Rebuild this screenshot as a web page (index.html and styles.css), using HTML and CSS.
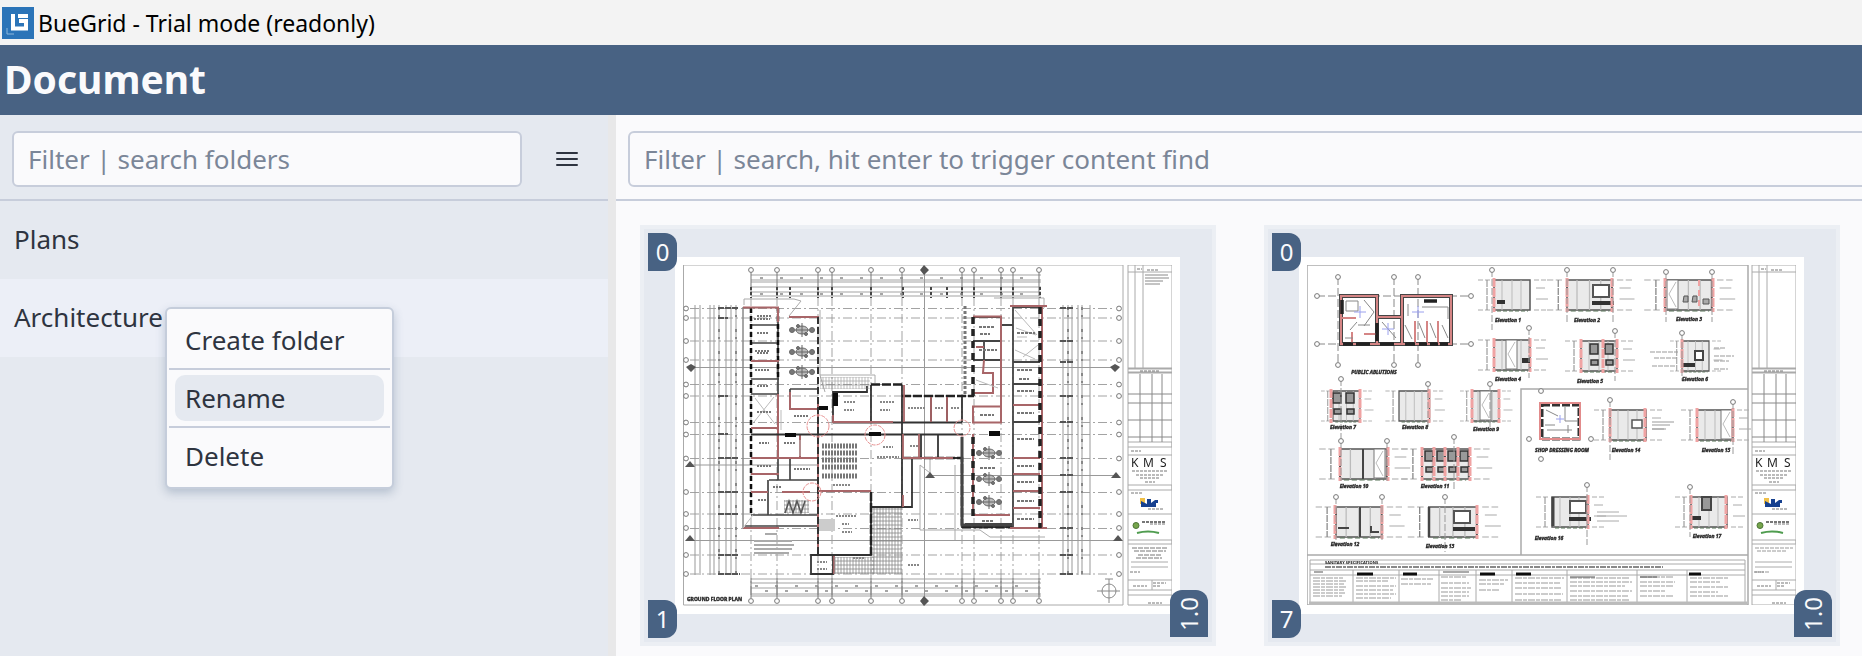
FILE: index.html
```html
<!DOCTYPE html>
<html lang="en">
<head>
<meta charset="utf-8">
<title>BueGrid - Trial mode (readonly)</title>
<link rel="stylesheet" href="styles.css">
</head>
<body>
<div class="titlebar">
  <svg class="app-icon" viewBox="0 0 32 32" aria-hidden="true">
    <rect width="32" height="32" fill="#2b74b8"/>
    <path d="M11 7v14.500h13V14h-7" fill="none" stroke="#fff" stroke-width="4"/>
    <path d="M16 9h10" stroke="#fff" stroke-width="4"/>
    <path d="M5 21v6h7" fill="none" stroke="#8fb8dc" stroke-width="1"/>
  </svg>
  <span>BueGrid - Trial mode (readonly)</span>
</div>
<header class="header"><h1>Document</h1></header>
<div class="workspace">
  <aside class="sidebar">
    <div class="toolbar">
      <input class="filter" type="text" aria-label="Filter folders" placeholder="Filter | search folders">
      <button class="menu-button" type="button" aria-label="Menu">
        <svg viewBox="0 0 22 18" aria-hidden="true"><path d="M1 3h20M1 9h20M1 15h20" stroke="#2e3440" stroke-width="2" stroke-linecap="round"/></svg>
      </button>
    </div>
    <ul class="folders">
      <li class="folder">Plans</li>
      <li class="folder active">Architecture</li>
    </ul>
    <div class="context-menu" role="menu">
      <button type="button" role="menuitem">Create folder</button>
      <hr>
      <button class="hovered" type="button" role="menuitem">Rename</button>
      <hr>
      <button type="button" role="menuitem">Delete</button>
    </div>
  </aside>
  <div class="splitter"></div>
  <main class="content">
    <div class="toolbar wide">
      <input class="filter" type="text" aria-label="Filter documents" placeholder="Filter | search, hit enter to trigger content find">
    </div>
    <div class="cards">
      <article class="card">
        <svg class="sheet" viewBox="675 257 505 357" role="img" aria-label="Ground floor plan">
          <defs>
            <filter id="soft" x="0" y="0" width="1" height="1"><feGaussianBlur stdDeviation=".7"/></filter>
            <pattern id="hatch" width="3" height="4" patternUnits="userSpaceOnUse"><path d="M0 1h3M1 0v4" stroke="#888" stroke-width=".8"/></pattern>
            <g id="bub"><circle r="2.400" fill="#fff" stroke="#777"/></g>
            <g id="tri"><path d="M-5 2L0 -4L5 2z" fill="#555"/></g>
            <g id="desk" fill="#777" stroke="#666"><ellipse rx="6" ry="4" fill="#bbb"/><path d="M0-7v14M-7 0h14" stroke-width="1"/><circle cx="-10" r="2.500"/><circle cx="10" r="2.500"/><circle cx="-4" cy="-4" r="1.500"/><circle cx="4" cy="4" r="1.500"/></g>
            <g id="block" fill="none" stroke="#aaa">
              <path d="M1128 265h44v340h-44zM1128 272h44M1135 265v103M1143 265v103M1128 442h44v5h-44M1128 455h44M1128 485h44v5h-44M1128 514h44M1128 540h44v4h-44M1131 562h37M1131 567h37M1128 580h44M1128 590h44M1128 595h44M1152 580v10"/>
              <path d="M1128 368.500h44M1128 372.500h44" stroke-width="2"/>
              <path d="M1128 394h44M1128 403h44M1128 420h44M1128 437h44M1140 374v68M1152 374v68M1162 374v68" stroke="#888"/>
              <path d="M1147 270h11M1137 269h5M1140 371h20M1131 451h10M1132 471h36M1136 475h28M1140 478h20M1145 482h10M1131 493h12M1148 509h15M1150 524h15M1133 586h14M1153 583h13M1153 586h8M1148 603h14M1130 572h10" stroke="#777" stroke-dasharray="3 1"/>
              <path d="M1140 498h5v6h-5z" fill="#f0c04a" stroke="none"/>
              <path d="M1141 507v-6l6 3v-5h4v4l4-3h3v3h-2v4z" fill="#17418f" stroke="none"/>
              <circle cx="1136" cy="525.500" r="3" fill="#76a54c" stroke="#4b7436"/>
              <path d="M1137 533q11-3 22 0" stroke="#4f9c4f" stroke-width="2"/>
              <path d="M1142 522h24" stroke="#777" stroke-width="2" stroke-dasharray="3 1"/>
              <text x="1131" y="467" font-size="12" fill="#222" stroke="none">K</text><text x="1143" y="467" font-size="12" fill="#222" stroke="none">M</text><text x="1160" y="467" font-size="12" fill="#222" stroke="none">S</text>
            </g>
          </defs>
          <rect x="675" y="257" width="505" height="357" fill="#fff"/>
          <g filter="url(#soft)">
            <use href="#block"/>
            <path d="M1132 548h36M1134 551h32M1138 555h24M1136 558h26" stroke="#777" stroke-dasharray="5 1"/>
            <path d="M1145 275h23M1145 278h24M1145 281h18M1145 284h15" stroke="#888"/>
            <g fill="none">
              <path d="M683.500 265H1123v340H683.500z" stroke="#aaa"/>
              <!-- grid axes -->
              <path d="M690 308.500h425M690 318h425M690 341h425M690 360h425M690 384.500h425M690 396h425M690 422.500h425M690 434.500h425M690 458.500h425M690 492.500h425M690 514h425M690 528.500h425M690 555h425M690 574h425M751 297v300M777 297v300M818 297v300M832 297v300M871 297v300M902 297v300M962 297v300M974 297v300M1001 297v300M1013 297v300M1039 297v300" stroke="#999" stroke-width=".9" stroke-dasharray="9 3 2 3"/>
              <path d="M690 367.500h425M690 465h128M930 475.500h185M690 540.500h425M924.500 270v330" stroke="#999"/>
              <path d="M751 275h290M751 280h290M751 282h290M751 287h290M751 292h290M751 296h290M751 579h290M751 583h290M751 588h290M751 594h290M751 596h290" stroke="#999" stroke-width=".9"/>
              <path d="M751 272v24M777 272v24M818 272v24M832 272v24M871 272v24M902 272v24M962 272v24M974 272v24M1001 272v24M1013 272v24M1039 272v24M751 578v20M777 578v20M818 578v20M832 578v20M871 578v20M902 578v20M962 578v20M974 578v20M1001 578v20M1013 578v20M1039 578v20" stroke="#777"/>
              <path d="M751 287v11M777 287v11M790 287v11M818 287v11M832 287v11M871 287v11M903 287v11M931 287v11M947 287v11M962 287v11M974 287v11M1001 287v11M1013 287v11M1040 287v11" stroke="#444" stroke-width="2" stroke-dasharray="3 2"/>
              <path d="M760 278h270M760 294h270M755 586h280M765 591h270" stroke="#888" stroke-width="1.500" stroke-dasharray="3 17"/>
              <path d="M695 305v270M700 305v270M710 305v270M714 305v270M719 305v270M726 305v270M731 305v270M736 305v270M1063 305v270M1068 305v270M1072 305v270M1078 305v270M1082 305v270M1090 305v270" stroke="#999"/>
              <path d="M719 307v268M736 307v268M1068 307v268M1082 307v268" stroke="#888" stroke-width="2" stroke-dasharray="3 5 2 12"/>
              <path d="M718 308h20M718 318h10M718 396h10M718 434h10M718 458h20M718 492h20M718 514h20M718 555h20M718 574h22M1060 308h14M1060 341h14M1060 362h14M1060 396h14M1060 422h14M1060 458h14M1060 475h14M1060 492h14M1060 528h14M1060 555h14M1060 574h14" stroke="#555" stroke-width="2" stroke-dasharray="6 1"/>
              <path d="M744 305v-6h50l7 2-12 15M820 375h55v8M820 375l5 17M820 310v65M994 298h50v10M930 458v15l-10-8v65h60l10 7h55M955 465v75" stroke="#aaa"/>
              <!-- west wing -->
              <path d="M743 307v221" stroke="#888" stroke-width="1.500"/>
              <path d="M751 325h28M751 343h28M751 379h28M751 394h28M751 458h28M769 480h49M751 515h67M745 526h73M778 307v173M768 480v35M790 389v20M790 458v22M790 389h28M751 492h17" stroke="#444" stroke-width="1.700"/>
              <path d="M751 308v207M778 308v70" stroke="#111" stroke-width="2.500" stroke-dasharray="5 3"/>
              <path d="M743 307.500h36M789 317h30M751 361h28M751 428h28M790 392v17h28M778 394v65M800 434v24M751 458h67M751 474h28M751 492h17M782 492h28M743 528h36M818 400v155M778 307v15" stroke="#a86567" stroke-width="2"/>
              <path d="M818 317v238" stroke="#333" stroke-width="2" stroke-dasharray="7 3"/>
              <path d="M754 422l20-25M755 398l20 26M743 528l10-13M781 430v-20M800 440v16" stroke="#bbb"/>
              <path d="M757 316h14M754 319h16M757 333h12M755 351h14M757 353h12M755 370h14M757 386h12M757 412h14M759 443h10M784 443h12M757 466h14M794 469h16M794 416h14M758 500h8M773 487h8" stroke="#777" stroke-width="2" stroke-dasharray="2 1"/>
              <rect x="784" y="500" width="25" height="13" fill="url(#hatch)"/><path d="M785 513l4-12 4 12 4-12 4 12 4-12" stroke="#555" stroke-width="1.500"/>
              <!-- central hall -->
              <path d="M833 392h34v-6M833 391v31M871 385v37M902 385v122M931 396v26M947 396v26M962 396v26M833 422.500h129M751 434.500h212M818 491h53M871 492v63h-38M811 555h22v19h-22zM871 507h41v-49M902 458h60v69h51M938 434v24M921 434v24" stroke="#333" stroke-width="1.800"/>
              <path d="M871 384.500h32M902 396h72M962 527h50M871 492v63M902 458h60v67" stroke="#222" stroke-width="2.500" stroke-dasharray="9 2"/>
              <path d="M904 385v37M931 397v25M947 397v25M818 491h53M903 434v24h50M919 434v24M834 556v18M903 495v12M833 415v7h60" stroke="#a86567" stroke-width="1.800"/>
              <path d="M833 393h5v13h-5zM785 433h11v4h-11zM869 432h12v4h-12zM989 431h11v5h-11zM819 406h9v4h-9z" fill="#111"/>
              <rect x="872" y="508" width="30" height="66" fill="url(#hatch)"/><rect x="834" y="557" width="40" height="17" fill="url(#hatch)"/><rect x="820" y="377" width="50" height="12" fill="url(#hatch)" opacity=".7"/>
              <path d="M822 446h35M822 453h35M822 460h35M822 467h35M822 476h35" stroke="#777" stroke-width="5" stroke-dasharray="2 1"/>
              <path d="M819 519h16v12h-16z" fill="#ccc"/>
              <path d="M844 402h12M844 410h10M880 402h14M880 410h10M908 408h18M935 408h8M951 408h8M836 516h20M842 524h7M842 532h10M817 562h10M817 569h10M833 485h18M883 447h10M877 457h22M910 446h9M908 520h10M908 565h12M853 558h12" stroke="#888" stroke-width="2" stroke-dasharray="2 1"/>
              <path d="M754 541h38M754 545h40M754 549h38M754 553h35M765 534h12" stroke="#aaa" stroke-width="2"/>
              <!-- east wing -->
              <path d="M973 317h28v106M973 341h28M973 360h28M984 341v19M1013 307v221M1013 307h27M1013 362h27M1013 384h27M1013 422h27M1001 325h12M973 515h37M965 524h47" stroke="#444" stroke-width="1.800"/>
              <path d="M962 437v88h50" stroke="#444" stroke-width="3"/>
              <path d="M973 316.500h28v106h-28v-16h27M976 347h8M984 360l-1 13h10v20h-20M1010 306h37M1013 405h27M1013 458h27M1013 474h27M1013 491h27M1013 508h27M1010 528h37M973 434v81h37M1042 307v221" stroke="#a86567" stroke-width="2"/>
              <path d="M973 317v80M1040 307v221M973 437v80" stroke="#222" stroke-width="3.500" stroke-dasharray="7 5"/>
              <path d="M965 306v90" stroke="#777" stroke-width="3" stroke-dasharray="3 2"/>
              <path d="M1015 310l22 25M1016 328l20 7M1038 345l-15 12M976 380l22 8M1015 350l20 9M1017 337h10" stroke="#bbb"/>
              <path d="M979 327h15M980 334h10M979 350h10M987 350h10M1017 333h18M1017 370h15M1019 379h10M1017 391h17M1017 413h17M1017 439h17M1017 466h17M1017 482h17M1017 501h17M1017 519h17M980 415h14M982 521h12M980 468h16" stroke="#777" stroke-width="2" stroke-dasharray="3 1"/>
            </g>
            <use href="#desk" x="802" y="330"/><use href="#desk" x="802" y="352"/><use href="#desk" x="802" y="372"/>
            <use href="#desk" x="989" y="453"/><use href="#desk" x="989" y="479"/><use href="#desk" x="989" y="502"/>
            <g fill="none" stroke="#e79292" stroke-dasharray="4 1"><circle cx="818" cy="426" r="11"/><circle cx="875" cy="435" r="10"/><circle cx="812" cy="492" r="9"/><circle cx="962" cy="428" r="8"/></g>
            <use href="#bub" x="751" y="270"/><use href="#bub" x="777" y="270"/><use href="#bub" x="818" y="270"/><use href="#bub" x="832" y="270"/><use href="#bub" x="871" y="270"/><use href="#bub" x="902" y="270"/><use href="#bub" x="962" y="270"/><use href="#bub" x="974" y="270"/><use href="#bub" x="1001" y="270"/><use href="#bub" x="1013" y="270"/><use href="#bub" x="1039" y="270"/>
            <use href="#bub" x="751" y="601"/><use href="#bub" x="777" y="601"/><use href="#bub" x="818" y="601"/><use href="#bub" x="832" y="601"/><use href="#bub" x="871" y="601"/><use href="#bub" x="902" y="601"/><use href="#bub" x="962" y="601"/><use href="#bub" x="974" y="601"/><use href="#bub" x="1001" y="601"/><use href="#bub" x="1013" y="601"/><use href="#bub" x="1039" y="601"/>
            <path d="M920 270l4-5 5 5-5 5zM920 601l4-5 5 5-5 5z" fill="#555"/>
            <g id="rows"><use href="#bub" x="686" y="308.500"/><use href="#bub" x="686" y="318"/><use href="#bub" x="686" y="341"/><use href="#bub" x="686" y="360"/><use href="#bub" x="686" y="384.500"/><use href="#bub" x="686" y="396"/><use href="#bub" x="686" y="422.500"/><use href="#bub" x="686" y="434.500"/><use href="#bub" x="686" y="458.500"/><use href="#bub" x="686" y="492"/><use href="#bub" x="686" y="514"/><use href="#bub" x="686" y="528"/><use href="#bub" x="686" y="555"/><use href="#bub" x="686" y="574"/></g>
            <use href="#rows" x="433"/>
            <use href="#tri" x="690" y="465"/><use href="#tri" x="690" y="539"/><use href="#tri" x="1116" y="476"/><use href="#tri" x="1118" y="539"/><use href="#tri" x="930" y="476"/><path d="M686 367l5-3 5 3-5 5zM1110 367l5-3 5 3-5 5z" fill="#555"/>
            <g fill="none" stroke="#888"><circle cx="1109" cy="591" r="7"/><path d="M1097 591h23M1109 579v24M1105 579h8"/></g>
            <text x="687" y="601" font-size="5" font-weight="bold" fill="#111" stroke="#333" stroke-width=".4">GROUND FLOOR PLAN</text>
          </g>
        </svg>
        <span class="badge top">0</span>
        <span class="badge bottom">1</span>
        <span class="badge version">1.0</span>
      </article>
      <article class="card">
        <svg class="sheet" viewBox="1299 257 505 357" role="img" aria-label="Room elevations">
          <defs>
            <g id="elev"><rect width="36" height="30" fill="#eaeaea" stroke="#555" stroke-width="1.500"/><path d="M8 0v30M18 0v30M27 0v30" stroke="#bbb"/><path d="M-16 0h12M-16 30h12M40 0h12M40 30h12" stroke="#aaa" stroke-dasharray="5 2"/><path d="M-7 0v30" stroke="#888" stroke-dasharray="7 1"/><path d="M3 31h31" stroke="#587058" stroke-dasharray="4 2"/><path d="M42 8h9M42 19h12" stroke="#aaa"/></g>
            <g id="screen"><rect x="15" y="4" width="16" height="12" fill="#fff" stroke="#555" stroke-width="2"/><path d="M14 22h22" stroke="#333" stroke-width="4"/></g>
            <g id="basin" fill="#999" stroke="#333" stroke-width="1.500"><rect x="2" y="3" width="8" height="10"/><rect x="3" y="19" width="7" height="5"/></g>
            <path id="red" d="M0-2v34" stroke="#f0a3a3" stroke-width="3" stroke-dasharray="9 1"/>
            <g id="door"><rect width="11" height="29" fill="#fff" stroke="#777"/><path d="M9 2L2 14l7 13" stroke="#bbb" fill="none"/></g>
          </defs>
          <rect x="1299" y="257" width="505" height="357" fill="#fff"/>
          <g filter="url(#soft)">
            <use href="#block" x="624"/>
            <path d="M1755 548h38M1757 551h30M1755 572h14" stroke="#999" stroke-dasharray="4 1"/>
            <g fill="none">
              <path d="M1307 265h441v340h-441z" stroke="#aaa" stroke-width="1.500"/>
              <path d="M1307 555h441M1521 555V389h227" stroke="#aaa" stroke-width="1.500"/>
              <!-- public ablutions -->
              <path d="M1338 277v88M1394 277v88M1418 277v88M1317 296h153M1317 344h153" stroke="#888" stroke-dasharray="8 3"/>
              <path d="M1341 296h36v48h-36zM1402 296h49v48h-49zM1377 317h25v27h-25z" stroke="#444" stroke-width="4"/>
              <path d="M1341 296h36v48h-36zM1402 296h49v48h-49zM1377 317h25v27h-25zM1341 318h15M1352 332v12M1364 334h12M1415 321v22M1427 321v22M1438 321v22" stroke="#d58585" stroke-width="2"/>
              <path d="M1343 344h10M1356 344h14M1380 344h14M1405 344h10M1419 344h8M1430 344h8M1440 344h8M1424 301h13M1377 323v18M1342 300v14" stroke="#222" stroke-width="3.500"/>
              <path d="M1346 301h12v10h-12zM1350 330l7-8M1422 307h26v12M1408 304v12M1405 325l7 14M1419 323l6 15M1430 323l6 15M1442 325l6 13M1382 322l14 16M1364 300l10 12-10 14M1358 325h12M1345 338h8" stroke="#888"/>
              <path d="M1360 306v12M1354 312h12M1418 306v12M1412 312h12M1388 323v12M1382 329h12" stroke="#9aa0ee"/>
            </g>
            <g fill="none">
              <use href="#elev" x="1494" y="280"/><use href="#red" x="1494" y="280"/><path d="M1497 300h8v4h-8z" fill="#333"/>
              <g transform="translate(1567 280) scale(1.250 1)"><use href="#elev"/></g><use href="#screen" x="1578" y="281"/><use href="#red" x="1567" y="280"/><use href="#red" x="1612" y="280"/>
              <g transform="translate(1665 280) scale(1.300 1)"><use href="#elev"/></g><use href="#door" x="1667" y="280"/><use href="#red" x="1665" y="280"/><use href="#red" x="1713" y="280"/><path d="M1684 296h4v6h-5zM1693 296h4v6h-5zM1703 299h6v5h-6z" stroke="#555" fill="#aaa"/><path d="M1699 280v30" stroke="#f0a3a3" stroke-width="2" stroke-dasharray="6 4"/>
              <use href="#elev" x="1494" y="340"/><use href="#door" x="1506" y="340"/><use href="#red" x="1494" y="340"/><use href="#red" x="1530" y="340"/><path d="M1522 358h8v5h-8z" fill="#333"/>
              <use href="#elev" x="1581" y="341"/><use href="#basin" x="1588" y="341"/><use href="#basin" x="1603" y="341"/><use href="#red" x="1581" y="341"/><use href="#red" x="1617" y="341"/><use href="#red" x="1603" y="341"/>
              <g transform="translate(1682 341) scale(.750 1)"><use href="#elev"/></g><path d="M1695 351h8v9h-8z" stroke="#444" stroke-width="2" fill="#fff"/><path d="M1683 365h12" stroke="#333" stroke-width="4"/><use href="#red" x="1682" y="341"/><path d="M1650 352h28M1654 358h24M1652 366h24M1714 348h12M1714 356h20M1714 361h15M1714 369h14" stroke="#999" stroke-dasharray="5 1"/>
              <g transform="translate(1333 391) scale(.750 1)"><use href="#elev"/></g><use href="#basin" x="1331" y="390"/><use href="#basin" x="1344" y="390"/><use href="#red" x="1331" y="391"/><use href="#red" x="1360" y="391"/>
              <g transform="translate(1399 391) scale(.850 1)"><use href="#elev"/></g><use href="#red" x="1429" y="391"/>
              <g transform="translate(1472 391) scale(.750 1)"><use href="#elev"/></g><use href="#door" x="1480" y="391"/><use href="#red" x="1472" y="391"/><use href="#red" x="1499" y="391"/>
              <path d="M1542 405h37v34h-37z" stroke="#333" stroke-width="3" stroke-dasharray="8 2"/><path d="M1540 403h40v36h-40z" stroke="#e28b8b" stroke-width="2"/><path d="M1556 419h8M1560 415v8" stroke="#9aa0ee"/><path d="M1546 410l12 6M1565 407v14h13M1547 430h25M1545 425h10M1568 433v-8" stroke="#888"/>
              <use href="#elev" x="1610" y="410"/><path d="M1632 420h10v8h-10z" stroke="#555" stroke-width="1.500" fill="#fff"/><use href="#red" x="1610" y="410"/><use href="#red" x="1645" y="410"/><path d="M1652 422h22M1652 425h18M1652 429h14" stroke="#999"/>
              <use href="#elev" x="1697" y="410"/><use href="#door" x="1721" y="410"/><use href="#red" x="1697" y="410"/><use href="#red" x="1733" y="410"/>
              <g transform="translate(1340 449) scale(1.300 1)"><use href="#elev"/></g><use href="#door" x="1374" y="449"/><path d="M1363 449v30" stroke="#444" stroke-width="2"/><use href="#red" x="1340" y="449"/><use href="#red" x="1388" y="449"/>
              <g transform="translate(1422 449) scale(1.300 1)"><use href="#elev"/></g><use href="#basin" x="1423" y="448"/><use href="#basin" x="1435" y="448"/><use href="#basin" x="1446" y="448"/><use href="#basin" x="1458" y="448"/><use href="#red" x="1422" y="449"/><use href="#red" x="1434" y="449"/><use href="#red" x="1445" y="449"/><use href="#red" x="1458" y="449"/><use href="#red" x="1470" y="449"/>
              <g transform="translate(1336 507) scale(1.270 1)"><use href="#elev"/></g><path d="M1360 507v30M1338 528h11M1371 526v6h8" stroke="#444" stroke-width="2"/><use href="#red" x="1335" y="507"/><use href="#red" x="1382" y="507"/>
              <g transform="translate(1429 507) scale(1.330 1)"><use href="#elev"/></g><use href="#screen" x="1439" y="507"/><path d="M1429 507v30" stroke="#444" stroke-width="2.500"/><use href="#red" x="1477" y="507"/>
              <use href="#elev" x="1552" y="497"/><use href="#screen" x="1555" y="497"/><path d="M1553 497v29" stroke="#444" stroke-width="3"/><use href="#red" x="1588" y="497"/><path d="M1597 512h22M1597 516h30M1597 521h22" stroke="#aaa"/>
              <use href="#elev" x="1691" y="497"/><path d="M1702 497h9v13h-9z" stroke="#444" stroke-width="2" fill="#999"/><path d="M1692 518h9" stroke="#333" stroke-width="4"/><use href="#red" x="1691" y="497"/><use href="#red" x="1726" y="497"/>
            </g>
            <path d="M1492 270v60M1567 270v52M1613 270v52M1666 272v50M1712 272v50M1529 328v50M1615 331v50M1682 333v48M1341 379v60M1428 384v44M1490 384v44M1610 400v60M1733 402v52M1341 441v40M1387 441v40M1454 437v52M1336 497v50M1382 497v45M1445 497v55M1587 485v60M1690 487v50" stroke="#999" stroke-dasharray="7 2"/>
            <use href="#bub" x="1338" y="277"/><use href="#bub" x="1394" y="277"/><use href="#bub" x="1418" y="277"/><use href="#bub" x="1338" y="365"/><use href="#bub" x="1394" y="365"/><use href="#bub" x="1418" y="365"/><use href="#bub" x="1317" y="296"/><use href="#bub" x="1317" y="344"/><use href="#bub" x="1471" y="296"/><use href="#bub" x="1471" y="344"/>
            <use href="#bub" x="1492" y="270"/><use href="#bub" x="1567" y="270"/><use href="#bub" x="1613" y="270"/><use href="#bub" x="1666" y="272"/><use href="#bub" x="1712" y="272"/><use href="#bub" x="1529" y="328"/><use href="#bub" x="1615" y="331"/><use href="#bub" x="1682" y="333"/><use href="#bub" x="1341" y="379"/><use href="#bub" x="1428" y="384"/><use href="#bub" x="1490" y="384"/><use href="#bub" x="1541" y="391"/><use href="#bub" x="1541" y="459"/><use href="#bub" x="1529" y="439"/><use href="#bub" x="1591" y="439"/><use href="#bub" x="1610" y="400"/><use href="#bub" x="1733" y="402"/><use href="#bub" x="1341" y="441"/><use href="#bub" x="1387" y="441"/><use href="#bub" x="1454" y="437"/><use href="#bub" x="1336" y="497"/><use href="#bub" x="1382" y="497"/><use href="#bub" x="1445" y="497"/><use href="#bub" x="1587" y="485"/><use href="#bub" x="1690" y="487"/>
            <g font-size="5" font-weight="bold" font-style="italic" fill="#111" stroke="#333" stroke-width=".4" text-anchor="middle">
              <text x="1374" y="374">PUBLIC ABLUTIONS</text>
              <text x="1508" y="322">Elevation 1</text><text x="1587" y="322">Elevation 2</text><text x="1689" y="321">Elevation 3</text>
              <text x="1508" y="381">Elevation 4</text><text x="1590" y="383">Elevation 5</text><text x="1695" y="381">Elevation 6</text>
              <text x="1343" y="429">Elevation 7</text><text x="1415" y="429">Elevation 8</text><text x="1486" y="431">Elevation 9</text>
              <text x="1562" y="452">SHOP DRESSING ROOM</text><text x="1626" y="452">Elevation 14</text><text x="1716" y="452">Elevation 15</text>
              <text x="1354" y="488">Elevation 10</text><text x="1435" y="488">Elevation 11</text>
              <text x="1345" y="546">Elevation 12</text><text x="1440" y="548">Elevation 13</text><text x="1549" y="540">Elevation 16</text><text x="1707" y="538">Elevation 17</text>
            </g>
            <!-- finishes schedule -->
            <g fill="none" stroke="#aaa">
              <path d="M1310 560h435v43h-435zM1310 564h435M1310 570h435M1310 575h435M1353 570v33M1399 570v33M1439 570v33M1476 570v33M1512 570v33M1567 570v33M1637 570v33M1687 570v33"/>
              <path d="M1309 603h438" stroke="#bbb" stroke-width="3"/>
              <path d="M1325 567h338" stroke="#888" stroke-width="2" stroke-dasharray="6 1 3 1"/>
              <path d="M1313 578h30M1313 581h33M1313 584h31M1313 587h33M1313 590h31M1313 593h32M1313 596h29M1356 578h40M1356 581h32M1356 586h40M1356 590h37M1356 594h40M1356 598h35M1401 579h32M1401 584h30M1441 577h26M1441 583h28M1441 588h30M1441 592h28M1441 596h28M1441 600h20M1479 580h29M1479 584h26M1479 590h20M1515 578h49M1515 583h45M1515 588h47M1515 594h48M1515 600h46M1570 578h60M1570 582h62M1570 586h55M1570 591h62M1570 596h58M1570 600h60M1640 577h34M1640 582h35M1640 586h33M1640 591h25M1640 596h34M1690 578h38M1690 582h30M1690 587h38M1690 592h28M1690 596h38" stroke-dasharray="7 1 4 1" stroke="#999"/>
              <path d="M1357 574h16M1403 574h14M1480 574h15M1516 574h15M1689 574h12" stroke="#111" stroke-width="3"/>
              <path d="M1314 572h9M1443 572h26M1570 577h25M1640 577h17" stroke="#555"/>
            </g>
            <text x="1325" y="564" font-size="4" font-weight="bold" fill="#222">SANITARY SPECIFICATIONS</text>
          </g>
        </svg>
        <span class="badge top">0</span>
        <span class="badge bottom">7</span>
        <span class="badge version">1.0</span>
      </article>
    </div>
  </main>
</div>
</body>
</html>
```
FILE: styles.css
```css
* { box-sizing: border-box; }

body {
  margin: 0;
  min-height: 100vh;
  display: flex;
  flex-direction: column;
  overflow: hidden;
  background: #fafafc;
  color: #2e3440;
  font-family: "Noto Sans", "Open Sans", sans-serif;
  font-size: 26px;
}

button, input { font: inherit; color: inherit; }

.titlebar {
  display: flex;
  align-items: center;
  gap: 4px;
  height: 45px;
  padding: 0 2px;
  background: #f3f3f3;
  color: #000;
  font-size: 23px;
}

.app-icon { width: 32px; height: 32px; }

.header {
  display: flex;
  align-items: center;
  height: 70px;
  padding: 0 4px 2px;
  background: #486283;
  color: #fafafc;
}

.header h1 { margin: 0; font-size: 39px; line-height: 48px; }

.workspace { flex: 1; display: flex; }

.sidebar {
  position: relative;
  flex: 0 0 608px;
  background: #e5e9f0;
}

.splitter { flex: 0 0 8px; background: #e8e8e9; }

.content { flex: 1; min-width: 0; overflow: hidden; }

.toolbar {
  display: flex;
  align-items: center;
  gap: 16px;
  height: 86px;
  padding: 4px 12px 0;
  border-bottom: 2px solid #c7cddb;
}

.toolbar.wide { margin-right: -24px; }

.filter {
  flex: 1;
  min-width: 0;
  height: 56px;
  padding: 0 14px;
  border: 2px solid #c7cddb;
  border-radius: 6px;
  background: #fafafc;
  outline: none;
}

.filter::placeholder { color: #7b8698; opacity: 1; }

.menu-button {
  display: grid;
  place-items: center;
  width: 58px;
  height: 56px;
  padding: 0;
  border: 0;
  background: none;
}

.menu-button svg { width: 22px; height: 18px; }

.folders { margin: 0; padding: 0; list-style: none; }

.folder { padding: 0 14px 2px; line-height: 76px; }

.folder.active { background: #eceff7; }

.context-menu {
  position: absolute;
  left: 165px;
  top: 192px;
  width: 229px;
  padding: 3px 2px;
  border: 2px solid #c5cddb;
  border-radius: 6px;
  background: #fafafc;
  box-shadow: 0 4px 10px #4862834d;
}

.context-menu button {
  display: block;
  width: calc(100% - 12px);
  height: 46px;
  margin: 5px 6px;
  padding: 0 10px;
  border: 0;
  border-radius: 10px;
  background: none;
  line-height: 46px;
  text-align: left;
  white-space: nowrap;
}

.context-menu .hovered { background: #e5e9f0; }

.context-menu hr { height: 2px; margin: 0; border: 0; background: #c7cddb; }

.cards {
  display: grid;
  grid-template-columns: 1fr 1fr;
  gap: 48px;
  padding: 24px 22px 8px 24px;
}

.card {
  position: relative;
  padding: 28px 32px 28px 31px;
  border: 4px solid #eceff4;
  background: #e5e9f0;
}

.sheet { display: block; width: 100%; }

.badge {
  position: absolute;
  left: 4px;
  display: grid;
  place-items: center;
  width: 29px;
  height: 38px;
  border-radius: 0 12px 12px 0;
  background: #486283;
  color: #fafafc;
  font-size: 24px;
  line-height: 38px;
}

.badge.top { top: 4px; }

.badge.bottom { bottom: 4px; }

.badge.version {
  left: auto;
  right: 4px;
  bottom: 5px;
  width: 38px;
  height: 47px;
  border-radius: 12px 12px 0 0;
  writing-mode: sideways-lr;
}
```
